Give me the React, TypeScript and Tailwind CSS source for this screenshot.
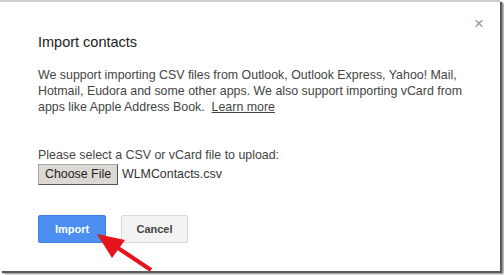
import React from "react";

export default function App() {
  return (
    <div className="w-[504px] h-[275px] bg-white relative overflow-hidden" style={{ fontFamily: '"Liberation Sans", Arial, sans-serif' }}>
      <div className="w-[500px] h-[271px] bg-white border-t-2 border-[#cfcfcf] shadow-[2px_2px_1px_#5a5a5a,4px_3px_2px_#999] flex flex-col pl-[38px] pr-[16px]">
        <div className="flex justify-end pt-[16px] h-[28px]">
          <span className="text-[#9a9a9a] text-[17px] leading-[12px]">×</span>
        </div>
        <h1 className="text-[14.5px] leading-[20px] text-[#222] mt-[2px]">Import contacts</h1>
        <p className="text-[12.4px] leading-[16px] text-[#444] mt-[15px] w-[440px]">
          We support importing CSV files from Outlook, Outlook Express, Yahoo! Mail, Hotmail, Eudora and some other apps. We also support importing vCard from apps like Apple Address Book.&nbsp;&nbsp;<span className="underline text-[#444]">Learn more</span>
        </p>
        <div className="text-[12.4px] leading-[16px] text-[#444] mt-[32px]">Please select a CSV or vCard file to upload:</div>
        <div className="flex items-center mt-[1px]">
          <div className="w-[80px] h-[21px] bg-[#dcd9d4] border border-[#a8a8a8] border-r-[#555] border-b-[#555] flex items-center justify-center text-[12.4px] text-[#222]">Choose File</div>
          <span className="text-[12.4px] text-[#333] ml-[4px]">WLMContacts.csv</span>
        </div>
        <div className="flex mt-[30px] gap-[15px]">
          <div className="w-[68px] h-[28px] rounded-[2px] bg-[#4d8ff0] border border-[#3f7fe0] flex items-center justify-center text-white text-[11px] font-bold">Import</div>
          <div className="w-[67px] h-[28px] rounded-[2px] bg-[#f3f3f3] border border-[#d8d8d8] flex items-center justify-center text-[#444] text-[11px] font-bold">Cancel</div>
        </div>
      </div>
      <svg className="absolute left-0 top-0" width="504" height="275" viewBox="0 0 504 275">
        <line x1="112" y1="244" x2="151" y2="270" stroke="#e8141c" strokeWidth="4" />
        <polygon points="97,234 125,240 112,258" fill="#e8141c" />
      </svg>
    </div>
  );
}
